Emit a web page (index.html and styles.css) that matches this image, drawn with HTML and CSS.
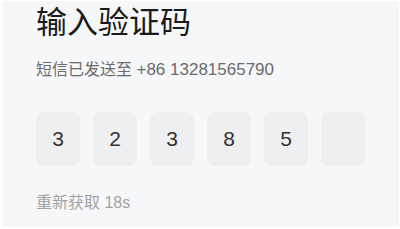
FILE: index.html
```html
<!DOCTYPE html>
<html lang="zh-CN">
<head>
    <meta charset="UTF-8">
    <title>输入验证码</title>
    <link rel="stylesheet" href="styles.css">
</head>
<body>
<div class="page">
    <h1 class="title">输入验证码</h1>
    <p class="hint">短信已发送至 <span class="phone">+86 13281565790</span></p>
    <div class="code">
        <span class="cell">3</span>
        <span class="cell">2</span>
        <span class="cell">3</span>
        <span class="cell">8</span>
        <span class="cell">5</span>
        <span class="cell"></span>
    </div>
    <p class="resend">重新获取 18s</p>
</div>
</body>
</html>
```

FILE: styles.css
```css
html, body {
    margin: 0;
    background: #fff;
}

body {
    font-family: "Liberation Sans", "Noto Sans CJK SC", sans-serif;
}

.page {
    margin: 1px 1px 2px 2px;
    height: 226px;
    padding: 0 0 0 34px;
    background: #f6f7f9;
    box-sizing: border-box;
    overflow: hidden;
}

.title {
    margin: 0;
    padding-top: 3px;
    font-size: 31px;
    line-height: 38px;
    font-weight: 400;
    color: #1a1a1a;
}

.hint {
    margin: 17px 0 0;
    font-size: 16px;
    line-height: 21px;
    color: #6b6b6b;
}

.phone {
    font-size: 17px;
}

.code {
    display: flex;
    gap: 13px;
    margin-top: 32px;
}

.cell {
    width: 44px;
    height: 54px;
    border-radius: 8px;
    background: #eeeff1;
    display: flex;
    align-items: center;
    justify-content: center;
    font-size: 21px;
    color: #333;
}

.resend {
    margin: 26px 0 0;
    font-size: 16px;
    line-height: 21px;
    color: #a3a3a3;
}
```
